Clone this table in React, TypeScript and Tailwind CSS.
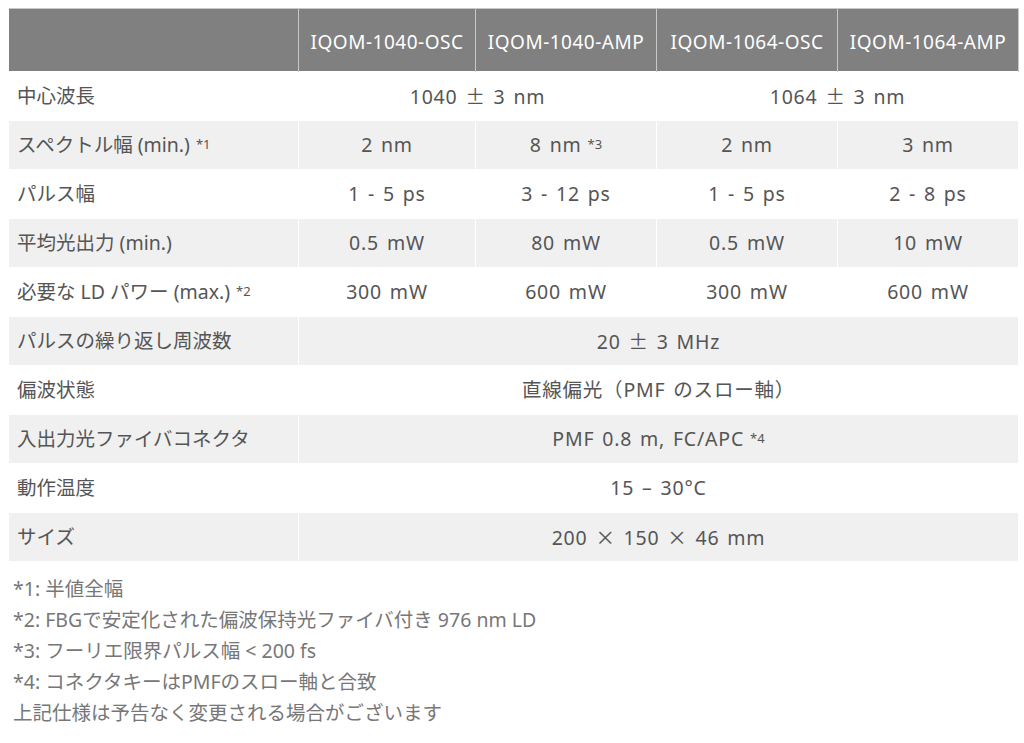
import React from 'react';

type Cell = { text: React.ReactNode; span?: number };
type Row = { label: React.ReactNode; cells: Cell[] };

const Sup = ({ children }: { children: React.ReactNode }) => (
  <sup className="relative -top-[3px] ml-[6px] text-[13px] tracking-normal">{children}</sup>
);

// full-width symbols come from the CJK face, as in the original
const J = ({ children }: { children: React.ReactNode }) => (
  <span style={{ fontFamily: '"Noto Sans CJK JP", sans-serif' }}>{children}</span>
);

const models = ['IQOM-1040-OSC', 'IQOM-1040-AMP', 'IQOM-1064-OSC', 'IQOM-1064-AMP'];

const rows: Row[] = [
  {
    label: '中心波長',
    cells: [
      { text: <>1040 <J>±</J> 3 nm</>, span: 2 },
      { text: <>1064 <J>±</J> 3 nm</>, span: 2 },
    ],
  },
  {
    label: (
      <>
        スペクトル幅 (min.)<Sup>*1</Sup>
      </>
    ),
    cells: [
      { text: '2 nm' },
      {
        text: (
          <>
            8 nm<Sup>*3</Sup>
          </>
        ),
      },
      { text: '2 nm' },
      { text: '3 nm' },
    ],
  },
  { label: 'パルス幅', cells: [{ text: '1 - 5 ps' }, { text: '3 - 12 ps' }, { text: '1 - 5 ps' }, { text: '2 - 8 ps' }] },
  { label: '平均光出力 (min.)', cells: [{ text: '0.5 mW' }, { text: '80 mW' }, { text: '0.5 mW' }, { text: '10 mW' }] },
  {
    label: (
      <>
        必要な LD パワー (max.)<Sup>*2</Sup>
      </>
    ),
    cells: [{ text: '300 mW' }, { text: '600 mW' }, { text: '300 mW' }, { text: '600 mW' }],
  },
  { label: 'パルスの繰り返し周波数', cells: [{ text: <>20 <J>±</J> 3 MHz</>, span: 4 }] },
  { label: '偏波状態', cells: [{ text: '直線偏光（PMF のスロー軸）', span: 4 }] },
  {
    label: '入出力光ファイバコネクタ',
    cells: [
      {
        text: (
          <>
            PMF 0.8 m, FC/APC<Sup>*4</Sup>
          </>
        ),
        span: 4,
      },
    ],
  },
  { label: '動作温度', cells: [{ text: '15 – 30°C', span: 4 }] },
  { label: 'サイズ', cells: [{ text: <>200 <J>×</J> 150 <J>×</J> 46 mm</>, span: 4 }] },
];

const notes = [
  '*1: 半値全幅',
  '*2: FBGで安定化された偏波保持光ファイバ付き 976 nm LD',
  '*3: フーリエ限界パルス幅 < 200 fs',
  '*4: コネクタキーはPMFのスロー軸と合致',
  '上記仕様は予告なく変更される場合がございます',
];

export default function App() {
  return (
    <div
      className="min-h-screen bg-white p-2 text-[#555555]"
      style={{ fontFamily: '"Noto Sans", "Noto Sans CJK JP", sans-serif' }}
    >
      <table className="w-[1010px] table-fixed border-collapse text-[19.5px]">
        <colgroup>
          <col className="w-[290px]" />
          <col className="w-[177px]" />
          <col className="w-[181px]" />
          <col className="w-[181px]" />
          <col className="w-[181px]" />
        </colgroup>
        <thead>
          <tr className="h-[63px] bg-[#808080] text-white">
            <th className="border-t border-[#c8c8c8]" />
            {models.map((m) => (
              <th
                key={m}
                className="border-x border-t border-[#c8c8c8] pt-1 text-center text-[19px] font-normal tracking-[0.5px]"
              >
                {m}
              </th>
            ))}
          </tr>
        </thead>
        <tbody>
          {rows.map((row, i) => (
            <tr key={i} className={`h-[49px] ${i % 2 === 1 ? 'bg-[#f0f0f0]' : 'bg-white'}`}>
              <td className="border border-white pl-2 text-left">{row.label}</td>
              {row.cells.map((c, j) => (
                <td
                  key={j}
                  colSpan={c.span ?? 1}
                  className="border border-white text-center tracking-[0.8px] [word-spacing:2px]"
                >
                  {c.text}
                </td>
              ))}
            </tr>
          ))}
        </tbody>
      </table>
      <div className="mt-[11px] pl-[5px] text-[19.5px] leading-[31px] text-[#777777]">
        {notes.map((n) => (
          <div key={n}>{n}</div>
        ))}
      </div>
    </div>
  );
}
